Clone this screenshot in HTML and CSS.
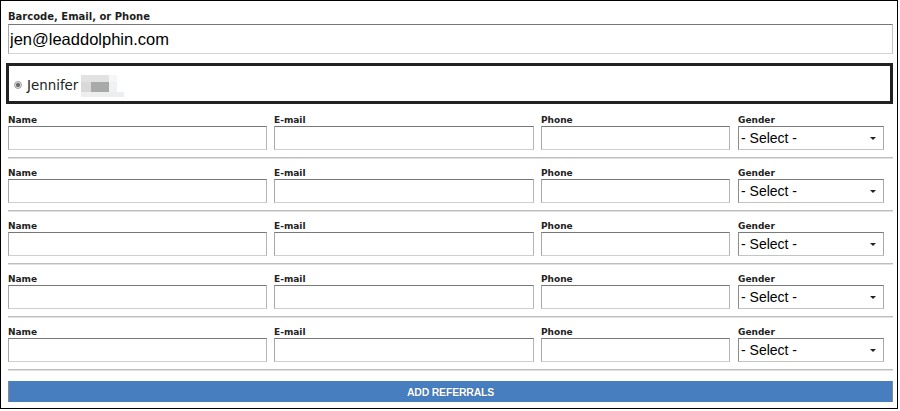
FILE: index.html
```html
<!DOCTYPE html>
<html>
<head>
<meta charset="utf-8">
<link rel="stylesheet" href="styles.css">
</head>
<body>
<div class="panel">
  <label class="field-label">Barcode, Email, or Phone</label>
  <input class="lookup" type="text" value="jen@leaddolphin.com">
  <div class="match">
    <span class="radio"></span>
    <span class="match-name">Jennifer</span>
    <span class="blur">
      <i class="c1"></i><i class="c1"></i><i class="c2"></i><i class="c0"></i>
      <i class="c3"></i><i class="c4"></i><i class="c5"></i><i class="c0"></i>
      <i class="c6"></i><i class="c6"></i><i class="c6"></i><i class="c6"></i>
    </span>
  </div>

  <div class="ref-row">
    <div class="cell"><label>Name</label><input class="in w-name" type="text"></div>
    <div class="cell"><label>E-mail</label><input class="in w-mail" type="text"></div>
    <div class="cell"><label>Phone</label><input class="in w-phone" type="text"></div>
    <div class="cell"><label>Gender</label><div class="sel-wrap"><select class="sel"><option>- Select -</option></select></div></div>
  </div>
  <hr class="sep">
  <div class="ref-row">
    <div class="cell"><label>Name</label><input class="in w-name" type="text"></div>
    <div class="cell"><label>E-mail</label><input class="in w-mail" type="text"></div>
    <div class="cell"><label>Phone</label><input class="in w-phone" type="text"></div>
    <div class="cell"><label>Gender</label><div class="sel-wrap"><select class="sel"><option>- Select -</option></select></div></div>
  </div>
  <hr class="sep">
  <div class="ref-row">
    <div class="cell"><label>Name</label><input class="in w-name" type="text"></div>
    <div class="cell"><label>E-mail</label><input class="in w-mail" type="text"></div>
    <div class="cell"><label>Phone</label><input class="in w-phone" type="text"></div>
    <div class="cell"><label>Gender</label><div class="sel-wrap"><select class="sel"><option>- Select -</option></select></div></div>
  </div>
  <hr class="sep">
  <div class="ref-row">
    <div class="cell"><label>Name</label><input class="in w-name" type="text"></div>
    <div class="cell"><label>E-mail</label><input class="in w-mail" type="text"></div>
    <div class="cell"><label>Phone</label><input class="in w-phone" type="text"></div>
    <div class="cell"><label>Gender</label><div class="sel-wrap"><select class="sel"><option>- Select -</option></select></div></div>
  </div>
  <hr class="sep">
  <div class="ref-row">
    <div class="cell"><label>Name</label><input class="in w-name" type="text"></div>
    <div class="cell"><label>E-mail</label><input class="in w-mail" type="text"></div>
    <div class="cell"><label>Phone</label><input class="in w-phone" type="text"></div>
    <div class="cell"><label>Gender</label><div class="sel-wrap"><select class="sel"><option>- Select -</option></select></div></div>
  </div>
  <hr class="sep last">

  <button class="add" type="button">ADD REFERRALS</button>
</div>
</body>
</html>
```

FILE: styles.css
```css
html, body {
  margin: 0;
  padding: 0;
  background: #fff;
}

.panel {
  box-sizing: border-box;
  width: 898px;
  height: 409px;
  border: 1px solid #000;
  padding: 10px 4px 0 7px;
  display: flex;
  flex-direction: column;
  font-family: "DejaVu Sans", Verdana, sans-serif;
  color: #222;
}

.field-label {
  display: block;
  font-weight: bold;
  font-size: 10px;
  line-height: 12px;
  height: 13px;
  color: #1e1e1e;
}

.lookup {
  box-sizing: border-box;
  width: 885px;
  height: 30px;
  margin: 0;
  padding: 0 2px 0 1px;
  border: 1px solid;
  border-color: #777 #c4c4c4 #d4d4d4 #a8a8a8;
  font-family: "Liberation Sans", Arial, sans-serif;
  font-size: 16.5px;
  color: #000;
  outline: none;
}

.match {
  box-sizing: border-box;
  width: 887px;
  height: 41px;
  margin: 9px 0 0 -2px;
  border: 3px solid #222;
  display: flex;
  align-items: center;
  padding-left: 5px;
  padding-top: 3px;
}

.radio {
  box-sizing: border-box;
  width: 8px;
  height: 8px;
  border-radius: 50%;
  border: 1px solid #a0a0a0;
  background: radial-gradient(circle, #6a6a6a 0 1.6px, #dcdcdc 2.4px);
}

.match-name {
  font-size: 13.4px;
  color: #222;
  margin-left: 5px;
}

.blur {
  display: grid;
  grid-template-columns: 10px 18px 8px 7px;
  grid-template-rows: 7px 10px 5px;
  margin-left: 3px;
  margin-top: 2px;
  filter: blur(0.4px);
}

.blur i { display: block; }
.blur .c0 { background: #fff; }
.blur .c1 { background: #e2e2e2; }
.blur .c2 { background: #f4f6f8; }
.blur .c3 { background: #d9d9d9; }
.blur .c4 { background: #a9a9a9; }
.blur .c5 { background: #eff1f3; }
.blur .c6 { background: #eeeeee; }

.ref-row {
  display: grid;
  grid-template-columns: 266px 267px 197px 155px;
  margin-top: 11px;
}

.sep + .ref-row {
  margin-top: 9px;
}

.cell label {
  display: block;
  font-weight: bold;
  font-size: 9px;
  line-height: 11px;
  height: 11px;
  color: #222;
}

.in {
  box-sizing: border-box;
  display: block;
  height: 24px;
  margin: 0;
  padding: 0 2px;
  border: 1px solid;
  border-color: #777 #b4b4b4 #cfcfcf #a8a8a8;
  outline: none;
  background: #fff;
}

.w-name { width: 259px; }
.w-mail { width: 260px; }
.w-phone { width: 189px; }

.sel-wrap {
  position: relative;
  width: 146px;
  height: 24px;
}

.sel {
  -webkit-appearance: none;
  appearance: none;
  box-sizing: border-box;
  width: 146px;
  height: 24px;
  margin: 0;
  padding: 0 0 0 2px;
  border: 1px solid;
  border-color: #7a7a7a #a8a8a8 #c4c4c4 #8c8c8c;
  border-radius: 0;
  background: #fff;
  font-family: "Liberation Sans", Arial, sans-serif;
  font-size: 14px;
  color: #000;
  outline: none;
}

.sel-wrap::after {
  content: "";
  position: absolute;
  right: 8px;
  top: 11px;
  width: 0;
  height: 0;
  border-left: 3px solid transparent;
  border-right: 3px solid transparent;
  border-top: 3px solid #222;
}

.sep {
  box-sizing: border-box;
  width: 885px;
  height: 2px;
  margin: 7px 0 0 0;
  border: 0;
  border-top: 1px solid #bdbdbd;
  border-bottom: 1px solid #e2e2e2;
}

.sep.last {
  margin-bottom: 10px;
}

.add {
  box-sizing: border-box;
  width: 885px;
  height: 21px;
  margin: 0;
  padding: 0;
  border: 0;
  border-left: 1px solid #8a8a8a;
  border-right: 1px solid #8a8a8a;
  background: #467ebf;
  color: #fff;
  font-family: "Liberation Sans", Arial, sans-serif;
  font-weight: bold;
  font-size: 10.5px;
  letter-spacing: -0.2px;
  text-shadow: 0 0 1px rgba(0, 0, 0, 0.35);
}
```
